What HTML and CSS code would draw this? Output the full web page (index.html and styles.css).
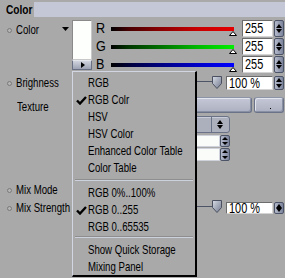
FILE: index.html
```html
<!DOCTYPE html>
<html>
<head>
<meta charset="utf-8">
<link rel="stylesheet" href="styles.css">
</head>
<body>
<div class="panel">
  <div class="head"><span class="title"><span class="t">Color</span></span><div class="headbar"></div></div>

  <div class="row crow">
    <div class="lab"><i class="dot"></i><span class="t">Color</span></div>
    <div class="tricol"><svg width="7" height="4" viewBox="0 0 7 4"><path d="M0 0H7L3.5 4Z" fill="#000"/></svg></div>
    <div class="swcol">
      <div class="swatch"></div>
      <div class="minibtn"><svg width="4" height="6" viewBox="0 0 4 6"><path d="M0 0L4 3L0 6Z" fill="#000"/></svg></div>
    </div>
    <div class="channels">
      <div class="ch"><span class="cl"><span class="t">R</span></span><div class="bar r"><svg class="mark" width="8" height="5" viewBox="0 0 8 5"><path d="M4 0.5L7.5 4.5H0.5Z" fill="#fff" stroke="#000"/></svg></div><div class="num"><span class="t">255</span></div><div class="spin"></div></div>
      <div class="ch"><span class="cl"><span class="t">G</span></span><div class="bar g"><svg class="mark" width="8" height="5" viewBox="0 0 8 5"><path d="M4 0.5L7.5 4.5H0.5Z" fill="#fff" stroke="#000"/></svg></div><div class="num"><span class="t">255</span></div><div class="spin"></div></div>
      <div class="ch"><span class="cl"><span class="t">B</span></span><div class="bar b"><svg class="mark" width="8" height="5" viewBox="0 0 8 5"><path d="M4 0.5L7.5 4.5H0.5Z" fill="#fff" stroke="#000"/></svg></div><div class="num"><span class="t">255</span></div><div class="spin"></div></div>
    </div>
  </div>

  <div class="row brow">
    <div class="lab"><i class="dot"></i><span class="t">Brighness</span></div>
    <div class="track"></div>
    <svg class="knob" width="10" height="13" viewBox="0 0 10 13"><defs><linearGradient id="kg" x1="0" y1="0" x2="1" y2="1"><stop offset="0" stop-color="#d8dce6"/><stop offset="1" stop-color="#70788c"/></linearGradient></defs><path d="M0.5 0.5H9.5V7.5L5 12.5L0.5 7.5Z" fill="url(#kg)" stroke="#4a5060"/></svg>
    <div class="num wide"><span class="t">100 %</span></div><div class="spin"></div>
  </div>

  <div class="row trow">
    <div class="lab nodot"><span class="t">Texture</span></div>
    <div class="btn b1"></div>
    <div class="btn b2"><i class="bdot"></i></div>
  </div>

  <div class="row corow">
    <div class="combo"><span class="cfill"></span><span class="carrow"></span></div>
  </div>

  <div class="row irow">
    <div class="field"></div><div class="spin small"></div>
  </div>
  <div class="row irow2">
    <div class="field"></div><div class="spin small"></div>
  </div>

  <div class="gap"></div>

  <div class="row mrow">
    <div class="lab"><i class="dot"></i><span class="t">Mix Mode</span></div>
  </div>
  <div class="row srow">
    <div class="lab"><i class="dot"></i><span class="t">Mix Strength</span></div>
    <div class="track"></div>
    <svg class="knob" width="10" height="13" viewBox="0 0 10 13"><defs><linearGradient id="kg2" x1="0" y1="0" x2="1" y2="1"><stop offset="0" stop-color="#d8dce6"/><stop offset="1" stop-color="#70788c"/></linearGradient></defs><path d="M0.5 0.5H9.5V7.5L5 12.5L0.5 7.5Z" fill="url(#kg2)" stroke="#4a5060"/></svg>
    <div class="num wide"><span class="t">100 %</span></div><div class="spin"></div>
  </div>

  <div class="menu">
    <div class="item"><span class="t">RGB</span></div>
    <div class="item"><svg class="check" width="11" height="9" viewBox="0 0 11 9"><path d="M1 4.5L4 7.5L10 1" fill="none" stroke="#000" stroke-width="2.4"/></svg><span class="t">RGB Colr</span></div>
    <div class="item"><span class="t">HSV</span></div>
    <div class="item"><span class="t">HSV Color</span></div>
    <div class="item"><span class="t">Enhanced Color Table</span></div>
    <div class="item"><span class="t">Color Table</span></div>
    <div class="sep"></div>
    <div class="item"><span class="t">RGB 0%..100%</span></div>
    <div class="item"><svg class="check" width="11" height="9" viewBox="0 0 11 9"><path d="M1 4.5L4 7.5L10 1" fill="none" stroke="#000" stroke-width="2.4"/></svg><span class="t">RGB 0..255</span></div>
    <div class="item"><span class="t">RGB 0..65535</span></div>
    <div class="sep sep2"></div>
    <div class="item"><span class="t">Show Quick Storage</span></div>
    <div class="item"><span class="t">Mixing Panel</span></div>
  </div>
</div>
</body>
</html>
```

FILE: styles.css
```css
* { box-sizing: border-box; margin: 0; padding: 0; }
html, body { margin: 0; background: #a9a9a9; }
body {
  width: 285px; height: 278px; overflow: hidden;
  font-family: "Liberation Sans", Arial, sans-serif;
  font-size: 13px; color: #000; line-height: 17px;
}
.panel { position: relative; width: 285px; height: 278px; }
.t { display: inline-block; white-space: nowrap; transform: scaleX(0.74); transform-origin: 0 50%; }

.head { display: flex; height: 19px; }
.title { width: 34px; padding-left: 6px; padding-top: 1px; font-weight: bold; font-size: 13px; overflow: visible; white-space: nowrap; }
.title .t { transform: scaleX(0.78); }
.headbar { flex: 1; height: 15px; margin-top: 2px; background: #c4c7d5; }

.row { display: flex; }
.lab { width: 62px; flex: none; padding-left: 7px; display: flex; align-items: flex-start; white-space: nowrap; }
.dot { display: inline-block; flex: none; width: 5px; height: 5px; border: 1px solid #7a7a7a; border-radius: 50%; background: #b4b4b4; margin-right: 4px; margin-top: 7px; }
.lab.nodot { padding-left: 17px; }

/* color row */
.crow { height: 54px; }
.crow .lab { padding-top: 2px; }
.tricol { width: 10px; padding-top: 8px; display: flex; align-items: flex-start; }
.swcol { width: 20px; padding-top: 1px; display: flex; flex-direction: column; }
.swatch { height: 40px; background: #fdfffd; border: 1px solid #c8c8c8; border-top-color: #8a8a8a; border-left-color: #8a8a8a; }
.minibtn { height: 10px; background: linear-gradient(#d0d4de, #9ca2b4); border: 1px solid #6a7084; border-top-color: #e4e6ee; border-radius: 1px; display: flex; justify-content: center; align-items: center; }
.minibtn svg { margin-left: 2px; }
.channels { margin-left: 4px; flex: 1; }
.ch { height: 18px; display: flex; }
.cl { width: 15px; padding-top: 1px; font-size: 14px; }
.cl .t { transform: scaleX(0.9); }
.bar { position: relative; width: 123px; height: 4px; margin-top: 8px; }
.bar.r { background: linear-gradient(to right, #000 0%, #4a0000 15%, #8a0000 40%, #c80000 70%, #e40000 100%); }
.bar.g { background: linear-gradient(to right, #000 0%, #003800 15%, #007000 40%, #00b800 70%, #00f000 100%); }
.bar.b { background: linear-gradient(to right, #000 0%, #00003c 15%, #000080 40%, #0000c8 70%, #0000ff 100%); }
.mark { position: absolute; right: -3px; top: 4px; }

.num {
  width: 31px; height: 17px; margin-left: 8px; margin-top: 1px;
  background: #fff; border: 1px solid #d4d4d4; border-top-color: #6c6c6c; border-left-color: #6c6c6c;
  font-size: 14px; line-height: 15px; padding-left: 2px; white-space: nowrap;
}
.num .t { transform: scaleX(0.78); }
.spin {
  position: relative; width: 10px; height: 17px; margin-left: 1px; margin-top: 1px;
  background: linear-gradient(to right, #b4bacb, #7c849c); border: 1px solid #4c5468; border-radius: 2px;
}
.spin::before, .spin::after { content: ""; position: absolute; left: 1px; border-left: 3px solid transparent; border-right: 3px solid transparent; }
.spin::before { top: 3px; border-bottom: 4px solid #000; }
.spin::after { bottom: 3px; border-top: 4px solid #000; }

/* brightness */
.brow { height: 20px; }
.brow .lab { padding-top: 1px; }
.track { width: 116px; height: 1px; margin-left: 34px; margin-top: 8px; background: #4e5566; }
.knob { margin-top: 3px; display: block; }
.num.wide { width: 47px; height: 14px; margin-left: 4px; margin-top: 3px; line-height: 12px; font-size: 14px; }
.brow .spin, .srow .spin { height: 14px; margin-top: 3px; }
.brow .spin::before, .srow .spin::before { top: 1px; }
.brow .spin::after, .srow .spin::after { bottom: 1px; }

/* texture */
.trow { height: 22px; }
.trow .lab { padding-top: 5px; }
.btn { position: relative; height: 16px; margin-top: 4px; background: linear-gradient(#c4c8d6, #acb0c0); border: 1px solid #6a7288; border-top-color: #8c94a8; border-radius: 3px; box-shadow: inset 1px 1px 0 #e2e4ee, inset -1px -1px 0 #8a90a4; }
.b1 { width: 156px; margin-left: 34px; }
.b2 { width: 30px; margin-left: 2px; display: flex; justify-content: center; align-items: flex-end; padding-bottom: 3px; padding-left: 3px; }
.bdot { display: block; width: 1px; height: 1px; background: #000; }

/* combobox */
.corow { height: 19px; }
.combo { display: flex; width: 134px; height: 17px; margin-left: 96px; margin-top: 1px; border: 1px solid #6a7288; border-radius: 3px; background: #acb0bc; box-shadow: inset 1px 1px 0 #c8ccd8; }
.cfill { flex: 1; border-right: 1px solid #6a7288; }
.carrow { position: relative; width: 17px; }
.carrow::before, .carrow::after { content: ""; position: absolute; left: 5px; border-left: 3px solid transparent; border-right: 3px solid transparent; }
.carrow::before { top: 3px; border-bottom: 4px solid #000; }
.carrow::after { top: 8px; border-top: 4px solid #000; }

/* inputs */
.irow { height: 14px; }
.irow2 { height: 14px; }
.field { width: 124px; height: 12px; margin-left: 96px; margin-top: 1px; background: #fafcfa; border: 1px solid #cfd2da; }
.irow2 .field { height: 13px; margin-top: 0; }
.spin.small { height: 12px; margin-left: 0; margin-top: 1px; }
.irow2 .spin.small { height: 13px; margin-top: 0; }
.spin.small::before { top: 1px; border-bottom-width: 3px; }
.spin.small::after { bottom: 1px; border-top-width: 3px; }

.gap { height: 19px; }

.mrow { height: 18px; }
.srow { height: 18px; }
.srow .track { margin-top: 7px; }
.srow .knob { margin-top: 1px; }
.srow .num.wide { height: 12px; margin-top: 3px; line-height: 10px; }
.srow .spin { height: 12px; }

/* popup menu */
.menu {
  position: absolute; left: 72px; top: 71px; width: 125px; height: 206px;
  background: #a9a9a9;
  border-left: 1px solid #d2d6e2; border-top: 1px solid #d2d6e2;
  border-right: 2px solid #000; border-bottom: 2px solid #000;
  padding-top: 2px;
}
.item { position: relative; height: 17px; padding-left: 15px; white-space: nowrap; }
.check { position: absolute; left: 3px; top: 5px; }
.sep { height: 8px; margin: 0 2px; background: linear-gradient(to bottom, transparent 3px, #8e8e8e 3px, #8e8e8e 4px, #cdd1dc 4px, #cdd1dc 5px, transparent 5px); }
.sep2 { height: 6px; background: linear-gradient(to bottom, transparent 1px, #8e8e8e 1px, #8e8e8e 2px, #cdd1dc 2px, #cdd1dc 3px, transparent 3px); }
```
